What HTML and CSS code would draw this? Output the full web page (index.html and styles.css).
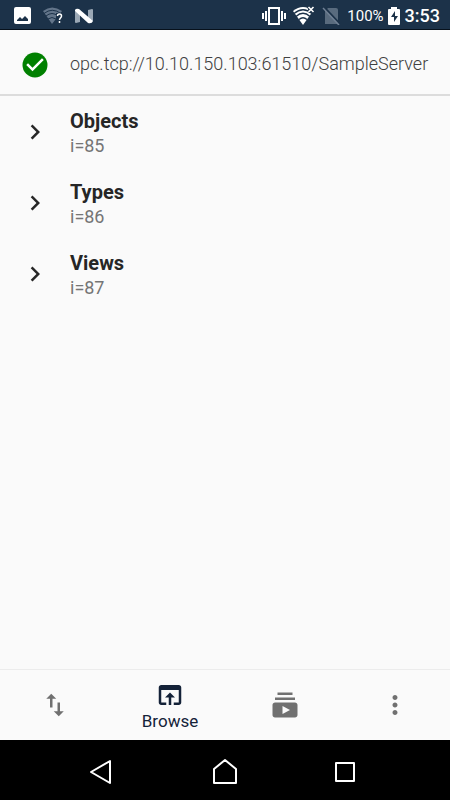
FILE: index.html
```html
<!DOCTYPE html>
<html lang="en">
<head>
<meta charset="utf-8">
<meta name="viewport" content="width=device-width, initial-scale=1">
<title>SampleServer</title>
<link rel="stylesheet" href="styles.css">
</head>
<body>
<div class="status">
  <div class="status-left">
    <svg width="18" height="18" viewBox="0 0 18 18"><path fill="#fff" fill-rule="evenodd" d="M2 0h13a2 2 0 0 1 2 2v13a2 2 0 0 1-2 2H2a2 2 0 0 1-2-2V2a2 2 0 0 1 2-2zM3 14h11v-2l-3-3-3 3-2-2-3 3z"/></svg>
    <svg width="20" height="18" viewBox="0 0 20 18"><path fill="#63758a" d="M0 4Q9 -3 19 4L9 17z"/><path fill="none" stroke="#1c3249" stroke-width="1" d="M1 6.500Q9 0 18 6.500M3 9Q9 4 15 9M5 12Q9 9 13 12"/><path fill="#1c3249" d="M13 6h7v12h-7z"/><path fill="none" stroke="#fff" stroke-width="1.500" d="M14.500 9q0-2 2-2t2 2q0 1-1 2t-1 2M16.500 14v2"/></svg>
    <svg width="20" height="18" viewBox="0 0 20 18"><path fill="#9ba8b5" d="M1 4l5 1v10l-4 1q-1 0-1-1zM14 3l4-1q1 0 1 1v11l-5-1z"/><path fill="#fff" d="M1 3q1-2 4-1l14 12q-1 3-5 2L1 4z"/></svg>
  </div>
  <div class="status-right">
    <svg width="24" height="18" viewBox="0 0 24 18"><path fill="none" stroke="#fff" stroke-width="2" d="M7 1h10v16H7zM4 4v10M20 4v10"/><path stroke="#fff" stroke-width="2" d="M1 6v6M23 6v6"/></svg>
    <svg width="22" height="19" viewBox="0 0 22 19"><path fill="#fff" d="M0 5Q10-3 20 5L10 19z"/><path fill="none" stroke="#1c3249" stroke-width="1.300" d="M1 7.500Q10 0 19 7.500M3 10.500Q10 4 17 10.500M6 13.500Q10 10 14 13.500"/><path fill="#1c3249" d="M14 0h8v7h-6z"/><path stroke="#fff" stroke-width="1.600" d="M15.500 1l5 5M20.500 1l-5 5"/></svg>
    <svg width="18" height="18" viewBox="0 0 18 18"><path fill="#596b7e" d="M3 4l3-3h8q2 0 2 2v14H3z"/><path stroke="#1c3249" stroke-width="2" d="M2 0l16 17"/><path stroke="#718195" stroke-width="1.500" d="M1 1l16 17"/></svg>
    <span class="percent">100%</span>
    <svg width="12" height="18" viewBox="0 0 12 18"><path fill="#fff" d="M3 0h6v2h2q1 0 1 1v14q0 1-1 1H1q-1 0-1-1V3q0-1 1-1h2z"/><path fill="#1c3249" d="M7 4L3 10h3v5l4-6H7z"/></svg>
    <time>3:53</time>
  </div>
</div>
<header class="server">
  <svg class="icon" viewBox="0 0 24 24"><path fill="green" d="M12 2a10 10 0 1 0 0 20 10 10 0 0 0 0-20z"/><path fill="#fff" d="M10 17l-5-5 1.410-1.410L10 14.170l7.590-7.590L19 8z"/></svg>
  <span class="url">opc.tcp://10.10.150.103:61510/SampleServer</span>
</header>
<main>
  <ul class="nodes">
    <li><button class="node"><svg class="icon" viewBox="0 0 24 24"><path d="M10 6L8.590 7.410 13.170 12l-4.580 4.590L10 18l6-6z"/></svg><span class="label"><b>Objects</b><span>i=85</span></span></button></li>
    <li><button class="node"><svg class="icon" viewBox="0 0 24 24"><path d="M10 6L8.590 7.410 13.170 12l-4.580 4.590L10 18l6-6z"/></svg><span class="label"><b>Types</b><span>i=86</span></span></button></li>
    <li><button class="node"><svg class="icon" viewBox="0 0 24 24"><path d="M10 6L8.590 7.410 13.170 12l-4.580 4.590L10 18l6-6z"/></svg><span class="label"><b>Views</b><span>i=87</span></span></button></li>
  </ul>
</main>
<nav class="tabs">
  <button aria-label="Transfer"><svg class="icon" viewBox="0 0 24 24"><path d="M16 17.010V10h-2v7.010h-3L15 21l4-3.990h-3zM9 3L5 6.990h3V14h2V6.990h3L9 3z"/></svg></button>
  <button class="active"><svg class="icon" viewBox="0 0 24 24"><path d="M19 4H5c-1.110 0-2 .9-2 2v12c0 1.100.89 2 2 2h4v-2H5V8h14v10h-4v2h4c1.100 0 2-.9 2-2V6c0-1.100-.89-2-2-2zm-7 6l-4 4h3v6h2v-6h3l-4-4z"/></svg><span>Browse</span></button>
  <button aria-label="Subscriptions"><svg class="icon" viewBox="0 0 24 24"><path d="M20 8H4V6h16v2zm-2-6H6v2h12V2zm4 10v8c0 1.100-.9 2-2 2H4c-1.100 0-2-.9-2-2v-8c0-1.100.9-2 2-2h16c1.100 0 2 .9 2 2zm-6 4l-6-3.270v6.530L16 16z"/></svg></button>
  <button aria-label="More"><svg class="icon" viewBox="0 0 24 24"><path d="M12 8c1.100 0 2-.9 2-2s-.9-2-2-2-2 .9-2 2 .9 2 2 2zm0 2c-1.100 0-2 .9-2 2s.9 2 2 2 2-.9 2-2-.9-2-2-2zm0 6c-1.100 0-2 .9-2 2s.9 2 2 2 2-.9 2-2-.9-2-2-2z"/></svg></button>
</nav>
<div class="system">
  <button aria-label="Back"><svg class="icon" viewBox="0 0 30 30"><path d="M20 4v22L1 15z"/></svg></button>
  <button aria-label="Home"><svg class="icon" viewBox="0 0 30 30"><path d="M4 26V12L15 3l11 9v14z"/></svg></button>
  <button aria-label="Recent apps"><svg class="icon" viewBox="0 0 30 30"><path d="M6 6h18v18H6z"/></svg></button>
</div>
</body>
</html>
```
FILE: styles.css
```css
* {
  box-sizing: border-box;
}

body {
  margin: 0;
  min-height: 100vh;
  display: flex;
  flex-direction: column;
  background: #fafafa;
  color: #262626;
  font-family: Roboto, sans-serif;
  font-size: 18px;
}

button {
  border: 0;
  padding: 0;
  background: none;
  color: inherit;
  font: inherit;
  cursor: pointer;
}

svg {
  display: block;
  flex: none;
}

.icon {
  width: 30px;
  height: 30px;
  fill: currentColor;
}

.status {
  height: 30px;
  padding: 2px 10px 0 14px;
  display: flex;
  align-items: center;
  justify-content: space-between;
  background: #1c3249;
  border-bottom: 1px solid #07111c;
  color: #fff;
}

.status-left,
.status-right {
  display: flex;
  align-items: center;
}

.status-left {
  gap: 11px;
}

.status-right {
  gap: 7px;
}

.percent {
  font-size: 15px;
  margin-right: -3px;
}

time {
  font-weight: 500;
  margin-left: -2px;
}

.server {
  height: 66px;
  padding: 3px 20px 0;
  display: flex;
  align-items: center;
  gap: 20px;
  border-bottom: 2px solid #dcdcdc;
}

.server svg {
  margin-top: 2px;
}

.url {
  color: #404040;
  font-weight: 300;
  white-space: nowrap;
}

main {
  flex: 1;
}

.nodes {
  margin: 0;
  padding: 0;
  list-style: none;
}

.node {
  width: 100%;
  height: 71px;
  padding: 0 20px;
  display: flex;
  align-items: center;
  gap: 20px;
  text-align: left;
}

.label {
  display: flex;
  flex-direction: column;
  padding-top: 2px;
  color: #757575;
  line-height: 24px;
}

.label b {
  color: #262626;
  font-size: 20px;
  font-weight: 700;
  line-height: 26px;
}

.tabs {
  height: 71px;
  display: grid;
  grid-template-columns: 11fr 12fr 11fr 11fr;
  border-top: 1px solid #ececec;
  color: #707070;
}

.tabs button {
  display: flex;
  flex-direction: column;
  align-items: center;
  justify-content: center;
}

.tabs .active {
  padding-top: 2px;
  color: #142238;
  font-size: 17px;
  line-height: 22px;
}

.system {
  height: 60px;
  padding: 0 10%;
  display: grid;
  grid-template-columns: repeat(3, 1fr);
  background: #000;
  color: #fff;
}

.system button {
  display: flex;
  align-items: center;
  justify-content: center;
  padding-top: 4px;
}

.system .icon {
  fill: none;
  stroke: currentColor;
  stroke-width: 2;
  stroke-linejoin: round;
}
```
